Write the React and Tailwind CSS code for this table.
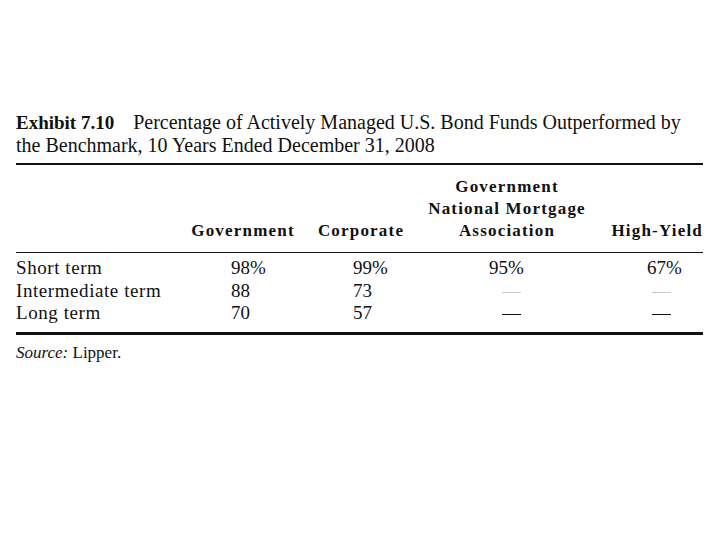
import React from 'react';

const serif = { fontFamily: '"Liberation Serif", "DejaVu Serif", serif' };

const rows = [
  { label: 'Short term', gov: '98%', corp: '99%', gnma: '95%', hy: '67%' },
  { label: 'Intermediate term', gov: '88', corp: '73', gnma: null, hy: null, light: true },
  { label: 'Long term', gov: '70', corp: '57', gnma: null, hy: null },
];

const Dash = ({ light }) => (
  <span className={`inline-block h-[1px] w-[19px] align-middle ${light ? 'bg-[#c8c8c8]' : 'bg-[#111]'}`} />
);

export default function App() {
  return (
    <div className="w-[720px] h-[540px] bg-white text-[#111]" style={serif}>
      <div className="pl-4 pt-[111px] w-[703px]">
        {/* Title */}
        <div className="text-[20px] leading-[23px]">
          <div>
            <span className="font-bold text-[19px]">Exhibit 7.10</span>
            <span className="ml-[19px]">Percentage of Actively Managed U.S. Bond Funds Outperformed by</span>
          </div>
          <div>the Benchmark, 10 Years Ended December 31, 2008</div>
        </div>
        <div className="mt-[6px] h-[2px] bg-[#111]" />

        {/* Column headers */}
        <div className="grid grid-cols-[164px_126px_110px_182px_105px] items-end pt-[11px] pb-[10px] text-[17px] leading-[22px] font-semibold tracking-[0.07em]">
          <div />
          <div className="text-center">Government</div>
          <div className="text-center">Corporate</div>
          <div className="text-center">
            <div>Government</div>
            <div>National Mortgage</div>
            <div>Association</div>
          </div>
          <div className="text-right">High-Yield</div>
        </div>
        <div className="h-[1px] bg-[#111]" />

        {/* Body */}
        <div className="pt-[4px] pb-[7px] text-[19px] leading-[22.5px]">
          {rows.map((r) => (
            <div key={r.label} className="grid grid-cols-[164px_126px_110px_182px_105px]">
              <div className="tracking-[0.03em]">{r.label}</div>
              <div className="pl-[51px]">{r.gov}</div>
              <div className="pl-[47px]">{r.corp}</div>
              <div className={r.gnma ? 'pl-[73px]' : 'pl-[86px]'}>
                {r.gnma ?? <Dash light={r.light} />}
              </div>
              <div className={r.hy ? 'pl-[49px]' : 'pl-[54px]'}>
                {r.hy ?? <Dash light={r.light} />}
              </div>
            </div>
          ))}
        </div>
        <div className="h-[3px] bg-[#111]" />

        {/* Source */}
        <div className="pt-[8px] text-[17px] leading-[20px]">
          <span className="italic">Source:</span> Lipper.
        </div>
      </div>
    </div>
  );
}
